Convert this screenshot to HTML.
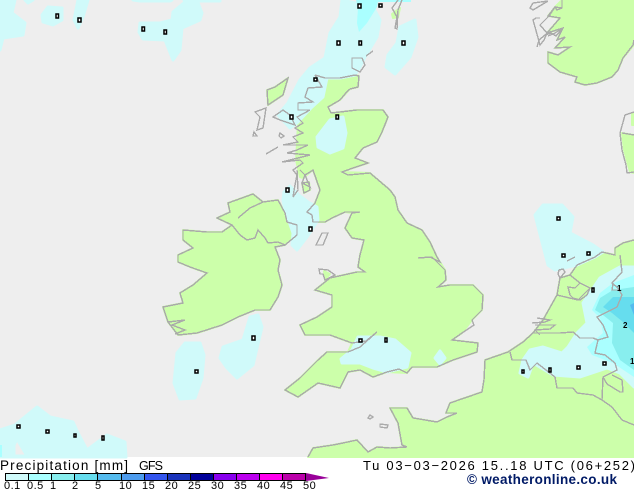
<!DOCTYPE html>
<html><head><meta charset="utf-8"><style>
html,body{margin:0;padding:0;background:#fff}
svg{display:block}
.l{fill:#ccffaa;stroke:#ccffaa;stroke-width:2;stroke-linejoin:round}
.p{fill:#d0fafa;stroke:#d0fafa;stroke-width:3;stroke-linejoin:round}
.c{fill:none;stroke:#aaaaaa;stroke-width:1.4;shape-rendering:crispEdges}
.m rect{fill:#fff;stroke:#000;stroke-width:1.5}
text{font-family:"Liberation Sans",sans-serif}
</style></head><body>
<svg width="634" height="490" viewBox="0 0 634 490" xmlns="http://www.w3.org/2000/svg">
<rect width="634" height="457" fill="#eeeeee"/>
<!-- land -->
<g class="l">
<polygon points="326,78 340,78 355,75 359,76 358,87 350,89 340,100 328,107 331,113 340,112 357,110 383,110 388,117 382,132 377,142 363,148 355,158 368,163 353,168 342,172 370,173 390,190 395,197 398,210 407,223 422,230 430,242 437,257 440,262 445,270 446,280 438,287 450,285 473,285 483,295 482,310 472,320 462,333 452,340 478,343 477,352 453,360 437,367 412,367 407,373 387,372 373,377 360,370 348,372 340,388 318,383 298,397 285,390 300,378 318,360 327,352 348,352 352,343 330,335 305,335 300,325 317,317 332,307 332,295 315,290 330,278 357,272 365,272 358,267 360,255 364,240 352,238 345,228 352,213 345,212 332,218 325,222 313,222 312,215 307,212 315,203 320,190 313,170 303,178 300,177 296,160 297,143 298,123 312,103"/>
<polygon points="228,203 242,198 253,194 263,202 278,200 285,213 297,227 295,235 285,245 275,247 280,260 278,270 282,285 278,297 270,310 255,310 238,317 222,325 197,333 178,335 168,322 163,307 183,303 180,293 193,285 207,273 190,267 178,262 178,255 193,248 183,240 183,230 207,232 222,232 232,225 217,218 230,212"/>
<polygon points="562,0 634,0 634,45 623,58 618,70 612,77 597,83 585,85 575,82 577,77 560,72 548,63 548,52 558,55 570,47 555,48 565,37 557,40 563,28 547,33 560,18 548,16 555,7"/>
<polygon points="622,133 634,135 634,173 630,172 624,150"/>
<polygon points="634,113 632,114 632,125 634,125"/>
<polygon points="288,78 275,87 267,90 268,105 283,95"/>
<polygon points="392,14 400,8 398,17 393,18"/>
<polygon points="302,183 309,182 310,190 304,193"/>
<polygon points="634,240 623,243 615,248 615,255 602,252 595,257 577,265 570,275 560,278 557,295 543,320 533,333 523,342 508,352 485,360 484,380 482,392 450,403 446,413 457,413 447,417 437,422 413,418 407,408 390,408 398,423 402,445 407,447 390,448 377,447 368,452 357,440 343,443 333,445 313,448 308,457 634,457"/>
<polygon points="324,271 330,274 325,280"/>
</g>
<!-- precipitation -->
<g class="p">
<polygon points="0,0 15,0 12,13 25,23 23,35 3,38 0,50"/>
<polygon points="25,0 33,0 28,3"/>
<polygon points="48,7 62,8 62,20 53,25 43,22 42,15"/>
<polygon points="78,0 88,0 83,17 78,28 74,20"/>
<polygon points="140,23 160,23 172,20 173,12 185,2 184,0 197,0 202,13 200,20 182,28 180,50 173,60 165,40 143,39 139,32"/>
<polygon points="133,0 172,0 170,1 140,1"/>
<polygon points="197,0 220,0 220,1 198,1"/>
<polygon points="342,0 373,7 380,20 377,37 365,57 360,67 355,75 340,78 327,78 323,97 312,107 297,123 290,128 278,115 288,103 300,80 310,68 325,58 330,33 340,17"/>
<polygon points="415,20 417,37 410,57 395,74 386,67 388,55 397,43 400,27"/>
<polygon points="317,137 330,120 343,117 346,133 343,148 330,153 318,147"/>
<polygon points="284,192 290,186 300,196 308,202 317,207 318,220 307,237 297,250 292,245 293,233 285,210 283,200"/>
<polygon points="358,337 380,337 395,340 410,353 407,367 387,372 373,368 360,363 342,363 341,359 352,350"/>
<polygon points="440,351 445,358 440,364 435,358"/>
<polygon points="185,343 200,343 204,355 202,378 195,398 180,399 174,383 177,353"/>
<polygon points="250,317 258,315 262,327 253,365 237,378 227,368 220,358 223,347 243,340"/>
<path d="M0,430 15,425 37,407 50,417 73,422 78,433 87,450 107,435 125,442 126,457 0,457Z M14,445 14,456 27,456 17,439Z" fill-rule="evenodd"/>
<polygon points="535,215 543,205 562,205 573,217 570,233 593,245 603,252 595,257 577,265 568,267 555,270 548,265 542,242"/>
<polygon points="634,267 620,267 600,278 583,303 587,323 577,333 568,347 562,353 543,347 530,350 523,360 520,373 528,377 533,363 553,375 580,377 607,368 620,373 634,387"/>
</g>
<polygon fill="#aaffff" points="634,275 613,283 600,293 592,310 600,318 603,333 587,347 592,355 613,363 634,377"/>
<polygon fill="#88eeee" points="634,287 613,290 600,298 595,310 603,315 613,323 612,343 620,360 634,370"/>
<polygon fill="#66ddee" points="634,297 613,297 603,307 612,313 623,322 634,333"/>
<polygon fill="#55bbee" points="634,303 630,305 634,315"/>
<polygon fill="#aaffff" points="370,0 411,0 411,2 378,2 377,7 367,23 359,32 357,23 358,8 356,0"/>
<polygon fill="#aaffff" points="0,445 2,445 2,457 0,457"/>
<!-- coast -->
<g class="c">
<polyline points="315,75 325,78 340,78 355,75 359,76 358,87 350,89 345,94 340,100 328,107 331,113 340,112 357,110 383,110 388,117 382,132 377,142 363,148 355,158 368,163 353,168 342,172 348,175 370,173 390,190 395,197 398,210 407,223 422,230 430,242 437,257 440,262 430,257 418,258 432,257 445,270 446,280 438,287 450,285 473,285 483,295 482,310 472,320 474,325 462,333 452,340 478,343 477,352 453,360 437,367 412,367 407,373 399,369 387,372 373,377 360,370 348,372 340,388 318,383 298,397 285,390 300,378 318,360 327,352 348,352 360,347 377,332 366,341 352,343 330,335 305,335 300,325 317,317 332,307 332,295 315,290 330,278 357,272 365,272 358,267 360,255 364,240 352,238 345,228 352,213 360,212 345,212 332,218 325,222 313,222 312,215 307,212 315,203 320,190 313,170 310,172 305,175 310,187 302,183 305,175 300,170"/>
<polyline points="315,75 322,87 308,88 305,97 313,102 298,103 298,110 310,110 297,117 303,123 295,128 303,133 293,137 298,142 283,145 308,145 297,150 287,153 310,155 282,162 300,160 303,163 293,170 297,175 295,185 293,197 298,190 297,170"/>
<polygon points="302,183 309,182 310,190 304,193"/>
<polygon points="228,203 242,198 253,194 263,202 278,200 285,213 287,222 297,225 297,235 285,245 275,247 280,260 278,270 282,285 278,297 270,310 255,310 238,317 222,325 197,333 178,335 168,322 163,307 183,303 180,293 193,285 207,273 190,267 178,262 178,255 193,248 183,240 183,230 207,232 222,232 232,225 217,218 230,212"/>
<polyline points="232,225 240,235 247,240 255,238 258,230 265,238 268,243 278,242 285,245"/>
<polyline points="238,218 250,208 263,202"/>
<polyline points="168,322 185,320 172,325 185,330 175,334"/>
<polygon points="322,233 328,233 323,245 316,245"/>
<polygon points="319,269 328,270 335,275 325,280 323,274 320,274"/>
<polygon points="288,78 275,87 267,90 268,105 283,95"/>
<polygon points="273,117 283,110 290,115 295,125 280,120"/>
<polygon points="255,112 266,108 263,128 257,130 260,117"/>
<polygon points="254,132 257,136 253,136"/>
<polygon points="280,133 284,136 281,138 279,136"/>
<polyline points="266,154 278,147"/>
<polygon points="352,58 362,58 365,65 360,72 352,68"/>
<polyline points="366,56 373,51"/>
<polyline points="398,0 392,8 397,17 395,28 397,29 398,10 402,0"/>
<polygon points="548,1 533,3 530,8 533,10"/>
<polyline points="562,0 562,8 557,10 555,7 549,16 540,25 547,33 544,40 540,45 535,27 533,20 536,18 540,18"/>
<polyline points="537,47 539,40 545,35 551,33 556,36 563,28 555,33 548,36"/>
<polyline points="562,0 562,8 555,7 548,16 560,18 547,33 563,28 557,40 565,37 555,48 570,47 558,55 548,52 548,63 560,72 577,77 575,82 585,85 597,83 612,77 618,70 623,58 633,45 634,40"/>
<polyline points="634,112 625,115 620,133 622,150 626,165 627,173 634,172"/>
<line x1="622" y1="133" x2="634" y2="135"/>
<polyline points="634,240 623,243 615,248 615,255 602,252 595,257 577,265 570,275 560,278 557,295 543,320 533,333 523,342 508,352 485,360 484,380 482,392 450,403 446,413 457,413 447,417 437,422 413,418 407,408 390,408 398,423 402,445 407,447 390,448 377,447 368,452 357,440 343,443 333,445 313,448 308,457"/>
<polygon points="370,415 373,417 370,419 368,418"/>
<polygon points="380,424 388,425 387,428 380,427"/>
<polygon points="559,270 563,269 565,272 560,278 558,274"/>
<polyline points="567,261 575,257"/>
<polyline points="570,275 580,283 575,288 568,287 570,295 575,300"/>
<polyline points="580,283 590,288 587,295 580,300 573,298"/>
<polyline points="557,295 578,300 590,288"/>
<polyline points="620,255 622,272 612,283 618,288 622,295 617,307 597,317 603,325 608,337 598,340 595,353 605,355 615,363 617,370 603,377 602,400"/>
<polyline points="612,283 613,284 612,290 620,290"/>
<polyline points="510,352 512,360 526,360 530,370 537,363 555,377 557,388 573,388 577,393 593,395 602,400 612,407 622,420 634,425"/>
<polyline points="532,333 560,333 573,332 580,338 593,338 598,340"/>
<polyline points="535,325 555,325 550,329 535,330 540,335"/>
<polyline points="537,318 550,320 545,322 532,323"/>
<polyline points="603,377 607,384 620,392 623,392 622,380 612,375"/>
</g>
<!-- markers -->
<g class="m">
<rect x="56" y="14" width="2.5" height="4"/><rect x="78" y="18" width="3" height="4"/><rect x="142" y="27" width="2.5" height="4"/><rect x="164" y="30" width="2.5" height="4"/>
<rect x="358" y="4" width="3" height="4"/><rect x="379" y="4" width="3" height="3"/><rect x="337" y="41" width="3" height="4"/><rect x="359" y="41" width="2.5" height="4"/><rect x="402" y="41" width="3" height="4"/>
<rect x="314" y="78" width="3" height="3"/><rect x="290" y="115" width="3" height="4"/><rect x="336" y="115" width="2.5" height="4"/>
<rect x="286" y="188" width="3" height="4"/><rect x="309" y="227" width="3" height="4"/><rect x="252" y="336" width="3" height="4"/><rect x="195" y="370" width="3" height="3"/>
<rect x="17" y="425" width="3" height="3"/><rect x="46" y="430" width="3" height="3"/><rect x="74" y="434" width="2" height="3"/><rect x="102" y="436" width="2" height="4"/>
<rect x="557" y="217" width="3" height="3"/><rect x="562" y="254" width="3" height="3"/><rect x="587" y="252" width="3" height="3"/><rect x="592" y="288" width="2" height="4"/>
<rect x="522" y="370" width="2" height="3"/><rect x="549" y="368" width="2" height="4"/><rect x="577" y="366" width="3" height="3"/><rect x="603" y="362" width="3" height="3"/>
<rect x="359" y="339" width="3" height="3"/><rect x="385" y="338" width="2" height="4"/>
</g>
<text x="617" y="291" font-size="8" font-weight="bold">1</text>
<text x="623" y="328" font-size="8" font-weight="bold">2</text>
<text x="630" y="364" font-size="8" font-weight="bold">1</text>
<!-- footer -->
<text x="0" y="470" font-size="13.5" textLength="128" lengthAdjust="spacing">Precipitation [mm]</text>
<text x="139" y="470" font-size="12.5" textLength="24" lengthAdjust="spacing">GFS</text>
<text x="363" y="470" font-size="13" textLength="272" lengthAdjust="spacing">Tu 03−03−2026 15..18 UTC (06+252)</text>
<text x="467" y="484" font-size="13.5" font-weight="bold" fill="#001a66" textLength="150" lengthAdjust="spacing">© weatheronline.co.uk</text>
<g shape-rendering="crispEdges">
<rect x="5" y="473" width="23" height="8" fill="#d0fafa"/><rect x="28" y="473" width="23" height="8" fill="#aaffff"/><rect x="51" y="473" width="23" height="8" fill="#88eeee"/><rect x="74" y="473" width="23" height="8" fill="#66ddee"/><rect x="97" y="473" width="24" height="8" fill="#55bbee"/><rect x="121" y="473" width="23" height="8" fill="#4d9cee"/><rect x="144" y="473" width="23" height="8" fill="#3355ee"/><rect x="167" y="473" width="23" height="8" fill="#1a33bb"/><rect x="190" y="473" width="23" height="8" fill="#000099"/><rect x="213" y="473" width="23" height="8" fill="#8800ee"/><rect x="236" y="473" width="23" height="8" fill="#bb00ee"/><rect x="259" y="473" width="23" height="8" fill="#ff00ee"/><rect x="282" y="473" width="23" height="8" fill="#bb00aa"/>
<path d="M5.5,473.5H305.5V480.5H5.5Z M28.5,473.5V480.5 M51.5,473.5V480.5 M74.5,473.5V480.5 M97.5,473.5V480.5 M121.5,473.5V480.5 M144.5,473.5V480.5 M167.5,473.5V480.5 M190.5,473.5V480.5 M213.5,473.5V480.5 M236.5,473.5V480.5 M259.5,473.5V480.5 M282.5,473.5V480.5" fill="none" stroke="#000"/>
</g>
<polygon points="306,473 329,478 306,481" fill="#990099"/>
<g font-size="11" letter-spacing=".5">
<text x="4" y="489">0.1</text><text x="27" y="489">0.5</text><text x="50" y="489">1</text><text x="72" y="489">2</text><text x="95" y="489">5</text><text x="119" y="489">10</text><text x="142" y="489">15</text><text x="165" y="489">20</text><text x="188" y="489">25</text><text x="211" y="489">30</text><text x="234" y="489">35</text><text x="257" y="489">40</text><text x="280" y="489">45</text><text x="303" y="489">50</text>
</g>
</svg>
</body></html>
